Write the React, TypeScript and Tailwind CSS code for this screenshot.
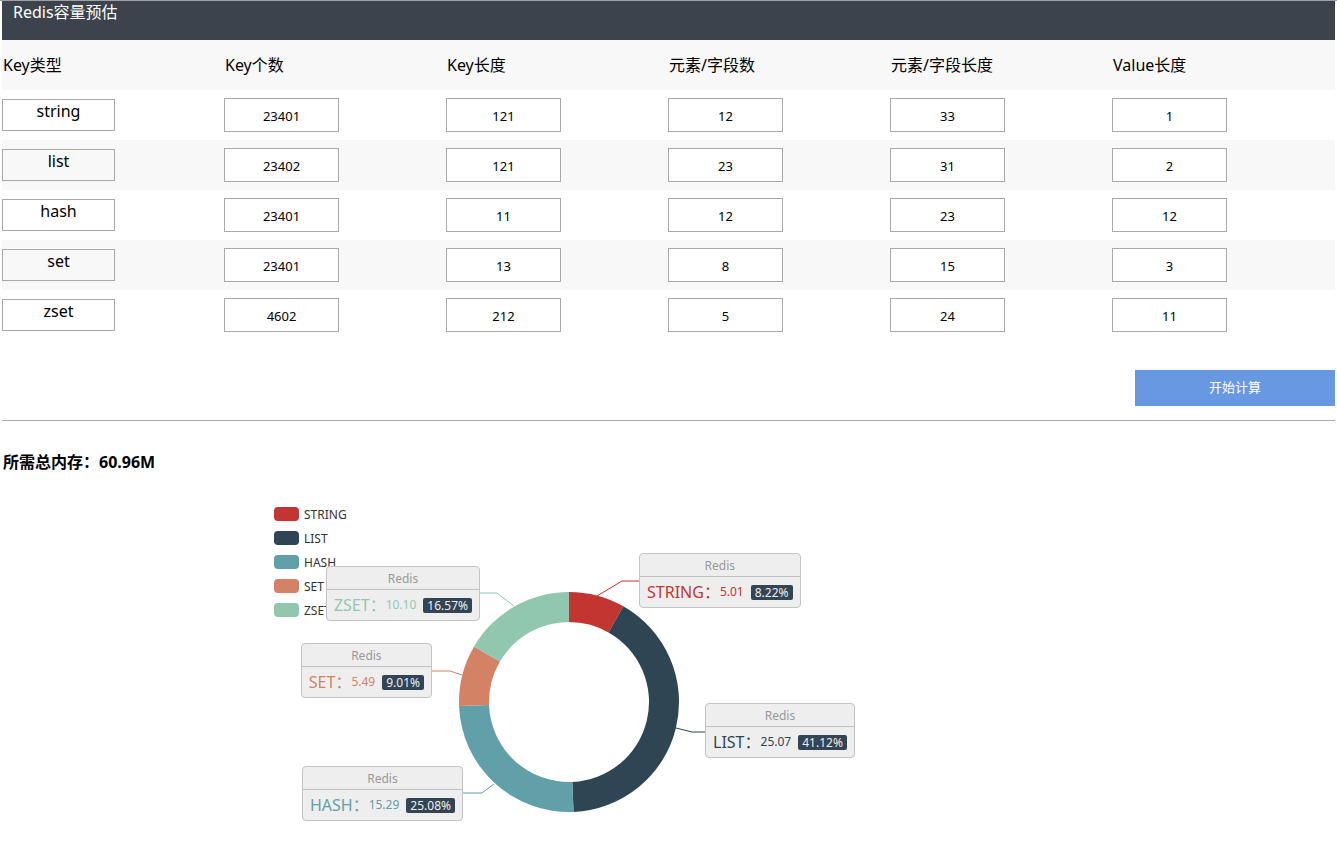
import React from "react";

const rows = [
  ["string", "23401", "121", "12", "33", "1"],
  ["list", "23402", "121", "23", "31", "2"],
  ["hash", "23401", "11", "12", "23", "12"],
  ["set", "23401", "13", "8", "15", "3"],
  ["zset", "4602", "212", "5", "24", "11"],
];

const headers = ["Key类型", "Key个数", "Key长度", "元素/字段数", "元素/字段长度", "Value长度"];

type Slice = {
  name: string;
  value: string;
  pct: number;
  color: string;
  textClass: string;
  line: string;
  boxClass: string;
};

const slices: Slice[] = [
  {
    name: "STRING",
    value: "5.01",
    pct: 8.22,
    color: "#c23531",
    textClass: "text-[#c23531]",
    line: "597,116 622,101 639,101",
    boxClass: "left-[639px] top-[73px]",
  },
  {
    name: "LIST",
    value: "25.07",
    pct: 41.12,
    color: "#2f4554",
    textClass: "text-[#2f4554]",
    line: "676,248 692,252 705,252",
    boxClass: "left-[705px] top-[223px]",
  },
  {
    name: "HASH",
    value: "15.29",
    pct: 25.08,
    color: "#61a0a8",
    textClass: "text-[#61a0a8]",
    line: "494,304 482,313 463,313",
    boxClass: "right-[874px] top-[286px]",
  },
  {
    name: "SET",
    value: "5.49",
    pct: 9.01,
    color: "#d48265",
    textClass: "text-[#d48265]",
    line: "462,195 450,191 432,191",
    boxClass: "right-[905px] top-[163px]",
  },
  {
    name: "ZSET",
    value: "10.10",
    pct: 16.57,
    color: "#91c7ae",
    textClass: "text-[#91c7ae]",
    line: "514,126 497,113 480,113",
    boxClass: "right-[857px] top-[86px]",
  },
];

const legendColors = [
  { name: "STRING", bg: "bg-[#c23531]" },
  { name: "LIST", bg: "bg-[#2f4554]" },
  { name: "HASH", bg: "bg-[#61a0a8]" },
  { name: "SET", bg: "bg-[#d48265]" },
  { name: "ZSET", bg: "bg-[#91c7ae]" },
];

function pt(cx: number, cy: number, r: number, deg: number) {
  const a = (deg * Math.PI) / 180;
  return [cx + r * Math.sin(a), cy - r * Math.cos(a)];
}

function arc(cx: number, cy: number, r0: number, r1: number, a0: number, a1: number) {
  const large = a1 - a0 > 180 ? 1 : 0;
  const [x0, y0] = pt(cx, cy, r1, a0);
  const [x1, y1] = pt(cx, cy, r1, a1);
  const [x2, y2] = pt(cx, cy, r0, a1);
  const [x3, y3] = pt(cx, cy, r0, a0);
  return `M${x0},${y0} A${r1},${r1} 0 ${large} 1 ${x1},${y1} L${x2},${y2} A${r0},${r0} 0 ${large} 0 ${x3},${y3} Z`;
}

function Donut() {
  let acc = 0;
  const total = slices.reduce((s, x) => s + x.pct, 0);
  return (
    <svg className="absolute left-0 top-0" width={1337} height={361} viewBox="0 0 1337 361">
      {slices.map((s) => {
        const a0 = (acc / total) * 360;
        acc += s.pct;
        const a1 = (acc / total) * 360;
        return <path key={s.name} d={arc(569, 222, 80, 110, a0, a1)} fill={s.color} />;
      })}
      {slices.map((s) => (
        <polyline key={s.name + "l"} points={s.line} fill="none" stroke={s.color} strokeWidth={1} />
      ))}
    </svg>
  );
}

function LabelBox({ s }: { s: Slice }) {
  return (
    <div
      className={`absolute ${s.boxClass} h-[55px] rounded-[4px] border border-[#c4c4c4] bg-[#eeeeee] whitespace-nowrap`}
    >
      <div className="h-[22px] pt-px text-center text-[12px] leading-[22px] text-[#999999]">Redis</div>
      <div className="h-px bg-[#c0c0c0]" />
      <div className={`flex h-[30px] items-center pl-[7px] pr-[7px] ${s.textClass}`}>
        <span className="text-[16px] leading-[20px]">{s.name}：</span>
        <span className="text-[12px] leading-[16px]">{s.value}</span>
        <span className="ml-[7px] rounded-[2px] bg-[#334455] px-[4px] text-[12px] leading-[15px] text-[#eeeeee]">
          {s.pct.toFixed(2)}%
        </span>
      </div>
    </div>
  );
}

export default function App() {
  return (
    <div className="min-h-[841px] w-[1337px] border-t border-[#a0a0a0] bg-white font-['Noto_Sans','Noto_Sans_CJK_SC',sans-serif] text-black">
      <div className="px-[2px]">
        <div className="h-[39px] bg-[#3c434c] pl-[11px] text-[16px] leading-[22px] text-white">Redis容量预估</div>

        <div className="w-[1333px]">
          <div className="grid h-[50px] grid-cols-[repeat(6,222px)] items-center bg-[#f8f8f8] text-[16px]">
            {headers.map((h) => (
              <div key={h} className="pl-px">
                {h}
              </div>
            ))}
          </div>
          {rows.map((r, i) => (
            <div
              key={i}
              className={`grid h-[50px] grid-cols-[repeat(6,222px)] items-center ${i % 2 === 1 ? "bg-[#f8f8f8]" : "bg-white"}`}
            >
              <div className="h-[32px] w-[113px] border border-[#a9a9a9] text-center text-[16px] leading-[22px]">
                {r[0]}
              </div>
              {r.slice(1).map((v, j) => (
                <div key={j}>
                  <input
                    readOnly
                    value={v}
                    className="block h-[34px] w-[115px] border border-[#a9a9a9] bg-white pt-[2px] text-center text-[13px] text-black outline-none"
                  />
                </div>
              ))}
            </div>
          ))}
        </div>

        <div className="mt-[30px] flex justify-end">
          <button className="h-[36px] w-[200px] bg-[#6998e3] text-[13px] text-white">开始计算</button>
        </div>

        <div className="mt-[14px] h-px bg-[#aaaaaa]" />

        <div className="pl-px pt-[29px] text-[16px] font-bold leading-[24px]">所需总内存：60.96M</div>
      </div>

      <div className="relative mt-[6px] h-[361px] w-[1337px] overflow-hidden">
        <Donut />
        <div className="absolute left-[274px] top-[27px] flex flex-col gap-[10px]">
          {legendColors.map((l) => (
            <div key={l.name} className="flex h-[14px] items-center gap-[5px]">
              <div className={`h-[14px] w-[25px] rounded-[4px] ${l.bg}`} />
              <span className="pt-[2px] text-[12px] leading-[14px] text-[#333333]">{l.name}</span>
            </div>
          ))}
        </div>
        {slices.map((s) => (
          <LabelBox key={s.name} s={s} />
        ))}
      </div>
    </div>
  );
}
